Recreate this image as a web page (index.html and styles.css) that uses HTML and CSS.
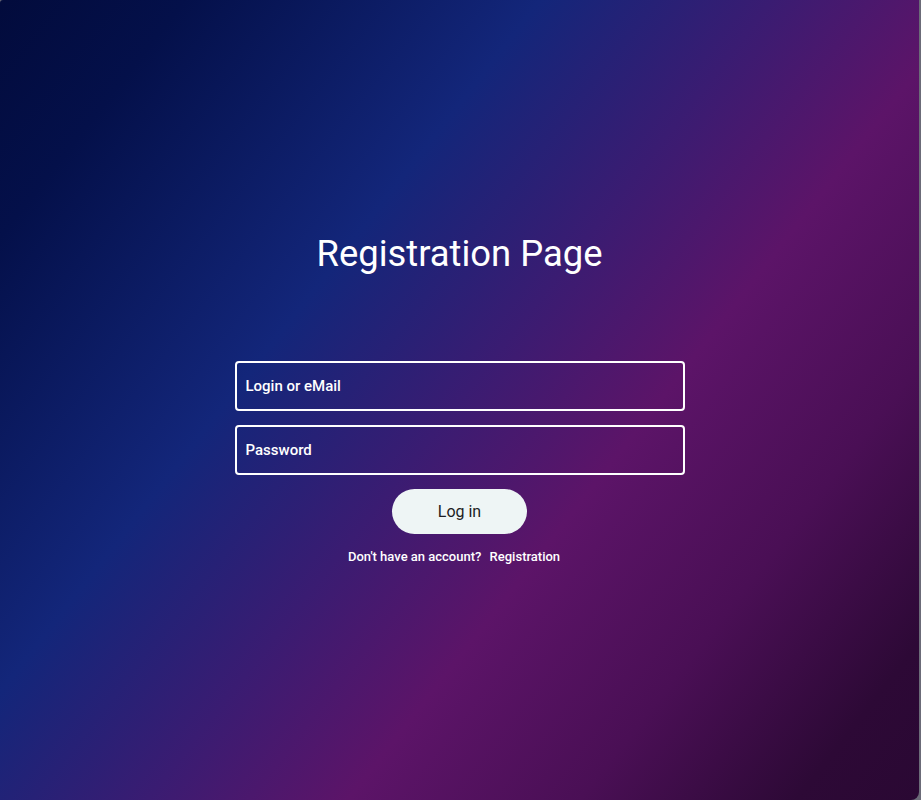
FILE: index.html
```html
<!DOCTYPE html>
<html lang="en">
<head>
<meta charset="utf-8">
<title>Registration Page</title>
<link rel="stylesheet" href="styles.css">
</head>
<body>
<main class="page">
  <h1 class="title">Registration Page</h1>
  <form class="form">
    <input class="field" type="text" placeholder="Login or eMail">
    <input class="field" type="password" placeholder="Password">
    <button class="btn" type="button">Log in</button>
    <p class="note">Don't have an account? <a class="link" href="#">Registration</a></p>
  </form>
</main>
</body>
</html>
```
FILE: styles.css
```css
html, body {
  margin: 0;
  padding: 0;
  height: 100%;
}
body {
  background: #6b6b78;
  font-family: Roboto, "Noto Sans", sans-serif;
}
.page {
  box-sizing: border-box;
  width: 919px;
  height: 800px;
  border-radius: 3px 0 8px 0;
  background: linear-gradient(128deg, #020b3c 0%, #04104a 12%, #13267a 35%, #3a1c72 50%, #5c1468 63%, #4a0f55 78%, #2d0936 92%, #2a0833 100%);
  display: flex;
  flex-direction: column;
  align-items: center;
  padding-top: 230px;
}
.title {
  margin: 0;
  color: #fff;
  font-weight: 400;
  font-size: 36.4px;
  line-height: 48px;
}
.form {
  margin-top: 83px;
  display: flex;
  flex-direction: column;
  align-items: center;
  width: 450px;
}
.field {
  box-sizing: border-box;
  width: 450px;
  height: 50px;
  border: 2px solid #fff;
  border-radius: 4px;
  background: transparent;
  padding: 0 9px;
  font-family: Roboto, sans-serif;
  font-size: 15px;
  font-weight: 500;
  color: #fff;
  outline: none;
}
.field + .field {
  margin-top: 14px;
}
.field::placeholder {
  color: #fff;
  opacity: 1;
}
.btn {
  margin-top: 14px;
  width: 135px;
  height: 45px;
  border: none;
  border-radius: 23px;
  background: #eef5f5;
  color: #1d1d22;
  font-family: Roboto, sans-serif;
  font-size: 16px;
  font-weight: 400;
  cursor: pointer;
}
.note {
  margin: 15px 0 0;
  padding-right: 11px;
  color: #fff;
  font-size: 13px;
  font-weight: 500;
  line-height: 16px;
}
.link {
  color: #fff;
  text-decoration: none;
  margin-left: 5px;
}
```
